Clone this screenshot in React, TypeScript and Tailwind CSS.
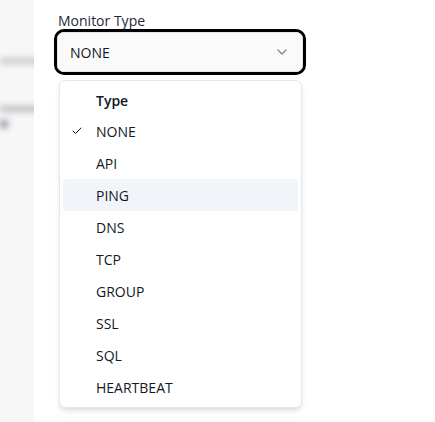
import { Check } from "lucide-react";

const TYPES = ["NONE", "API", "PING", "DNS", "TCP", "GROUP", "SSL", "SQL", "HEARTBEAT"];

export default function App() {
  const selected = "NONE";
  const highlighted = "PING";

  return (
    <div className="flex w-[435px] h-[422px] overflow-hidden bg-white text-[#111827] font-['Open_Sans','Noto_Sans',sans-serif]">
      {/* blurred page behind */}
      <div className="w-[34px] h-full shrink-0 bg-[#f7f7f8] overflow-hidden">
        <div className="blur-[3px] pt-[58px] flex flex-col">
          <div className="h-[6px] w-[60px] bg-[#c8c8cc]" />
          <div className="h-[6px] w-[60px] bg-[#bdbdc2] mt-[42px]" />
          <div className="h-[8px] w-[8px] bg-[#9a9aa0] mt-[8px]" />
        </div>
      </div>

      <div className="flex flex-col pl-[20px] pt-[13px]">
        <label className="pl-1 h-[16px] leading-[16px] text-[14px] text-[#1f2937]">
          Monitor Type
        </label>

        {/* trigger */}
        <div className="w-[252px] rounded-[10px] border-[3px] border-black">
          <button className="flex w-full h-[40px] items-center justify-between rounded-[7px] border border-[#e4e4e7] bg-[#fafafa] pl-3 pr-[15px] text-[14px]">
            <span>{selected}</span>
            <svg width="10" height="6" viewBox="0 0 10 6" fill="none" stroke="#8a8a8f" strokeWidth="1.4" strokeLinecap="round" strokeLinejoin="round">
              <path d="M1 1l4 4 4-4" />
            </svg>
          </button>
        </div>

        {/* menu */}
        <div className="ml-[5px] mt-[5px] w-[243px] rounded-md border border-[#e2e8f0] bg-white px-[3px] py-1 shadow-md">
          <div className="h-[30px] flex items-center pl-[33px] text-[14px] font-semibold">Type</div>
          {TYPES.map((t) => (
            <div
              key={t}
              className={`flex h-[32px] items-center rounded pl-2 text-[14px] ${
                t === highlighted ? "bg-[#f1f5f9]" : ""
              }`}
            >
              <span className="w-[25px] flex items-center">
                {t === selected && <Check size={12} strokeWidth={2} />}
              </span>
              {t}
            </div>
          ))}
        </div>
      </div>
    </div>
  );
}
